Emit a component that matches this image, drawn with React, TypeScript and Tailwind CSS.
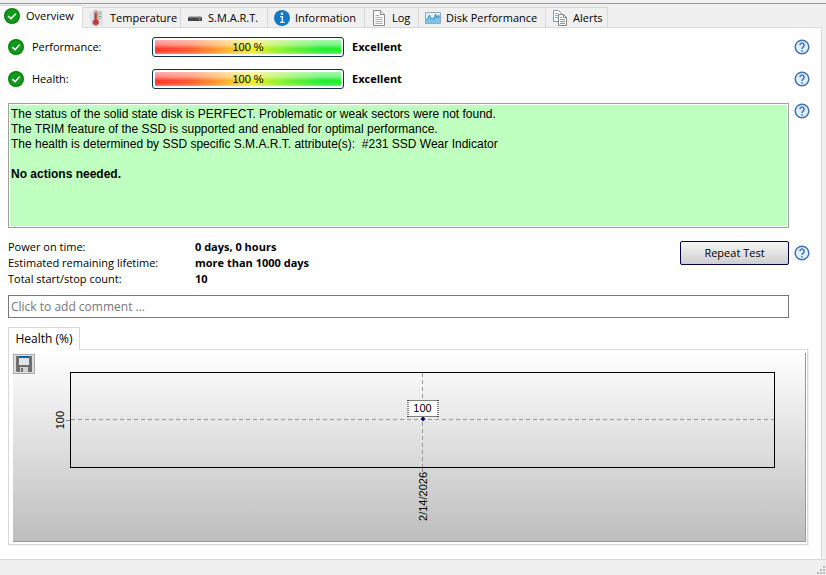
import { useState, type ReactNode } from "react";
import clsx from "clsx";

const CheckIcon = () => (
  <svg width="16" height="16" viewBox="0 0 16 16" className="shrink-0">
    <circle cx="8" cy="8" r="8" fill="#0b7a12" />
    <circle cx="8" cy="8" r="6.8" fill="#0d9a17" />
    <path d="M4.2 8.1 7 10.7l4.8-5" fill="none" stroke="#fff" strokeWidth="1.6" />
  </svg>
);

const ThermometerIcon = () => (
  <svg width="16" height="16" viewBox="0 0 16 16" className="shrink-0">
    <path d="M0 2 14 0v16H2z" fill="#dfe3ef" />
    <path d="M9 1h4v9H9z" fill="#d5e0c4" />
    <path d="M9.5 2.5h3M9.5 4.5h2M9.5 6.5h3M9.5 8.5h2" stroke="#8fa68a" />
    <path d="M5.2 2.2a1.6 1.6 0 0 1 3.2 0v7.2a3.2 3.2 0 1 1-3.2 0z" fill="#d6a7a7" stroke="#9a7480" strokeWidth=".6" />
    <path d="M6.8 3v8" stroke="#b03a38" strokeWidth="1.7" />
    <circle cx="6.8" cy="12.3" r="2.7" fill="#c8372c" />
  </svg>
);

const DriveIcon = () => (
  <svg width="16" height="16" viewBox="0 0 16 16" className="shrink-0">
    <path d="M2 6h12l1 2H1z" fill="#b4b4b4" />
    <path d="M1 7.5h14V11H1z" fill="#454545" />
    <path d="M11.5 9.3h2" stroke="#7fd07f" />
  </svg>
);

const InfoIcon = () => (
  <svg width="16" height="16" viewBox="0 0 16 16" className="shrink-0">
    <circle cx="8" cy="8" r="8" fill="#1279c9" />
    <circle cx="8" cy="3.8" r="1.2" fill="#fff" />
    <path d="M6.2 6.6h2.2v5.6M6 12.4h4.500" fill="none" stroke="#fff" strokeWidth="1.3" />
  </svg>
);

const LogIcon = () => (
  <svg width="16" height="16" viewBox="0 0 16 16" className="shrink-0">
    <path d="M2.5.5h7l4 4v11h-11z" fill="#fdfdfd" stroke="#8b8b8b" />
    <path d="M9.5.5v4h4" fill="#e4e4e4" stroke="#8b8b8b" />
    <path d="M4.5 5.5h4M4.5 7.5h7M4.5 9.5h7M4.5 11.5h7M4.5 13.5h7" stroke="#adadad" />
  </svg>
);

const GraphIcon = () => (
  <svg width="16" height="16" viewBox="0 0 16 16" className="shrink-0">
    <path d="M.5 2.5h15v11H.5z" fill="#dff2fc" stroke="#8fabbd" />
    <path d="M1 10 3 8l1.5-3L6 9l1.5-1L9 9.5 10.5 4 12 8l1.5-3L15 8v5H1z" fill="#7cc6ee" />
    <path d="M1 10 3 8l1.5-3L6 9l1.5-1L9 9.5 10.5 4 12 8l1.5-3L15 8" fill="none" stroke="#2d83bd" strokeWidth=".9" />
  </svg>
);

const CopyIcon = () => (
  <svg width="16" height="16" viewBox="0 0 16 16" className="shrink-0">
    <path d="M1.5.5h5l3 3v8h-8z" fill="#fff" stroke="#8d979f" />
    <path d="M3 3.5h3M3 5.5h5M3 7.5h3" stroke="#8db0cc" />
    <path d="M6.5 4.5h5l3 3v8h-8z" fill="#fff" stroke="#7d8890" />
    <path d="M11.5 4.5v3h3" fill="none" stroke="#7d8890" />
    <path d="M8 7.5h2M8 9.5h5M8 11.5h5M8 13.5h5" stroke="#6f9fc6" />
  </svg>
);

const SaveIcon = () => (
  <svg width="16" height="16" viewBox="0 0 16 16">
    <path d="M0 0h16v16H1l-1-1z" fill="#6e6e6e" />
    <path d="M3 0h10v9H3z" fill="#dfe4e7" />
    <path d="M3 0h10v2H3z" fill="#0c62a8" />
    <path d="M4 11h8v5H4z" fill="#d2d2d2" />
    <path d="M5 12h2v4H5z" fill="#6e6e6e" />
  </svg>
);

function HelpButton({ label }: { label: string }) {
  return (
    <button type="button" aria-label={label} className="h-4 w-4 shrink-0">
      <svg width="16" height="16" viewBox="0 0 16 16">
        <circle cx="8" cy="8" r="6.8" fill="#e0f1fd" stroke="#4272b8" strokeWidth="1.5" />
        <path d="M5.9 6.1a2.1 2.1 0 1 1 3.2 1.9C8.3 8.6 8 9 8 9.900" fill="none" stroke="#3f70b4" strokeWidth="1.5" />
        <circle cx="8" cy="11.8" r=".9" fill="#3f70b4" />
      </svg>
    </button>
  );
}

const tabs: { name: string; icon: ReactNode; width: string }[] = [
  { name: "Overview", icon: <CheckIcon />, width: "w-[83px]" },
  { name: "Temperature", icon: <ThermometerIcon />, width: "w-[98px]" },
  { name: "S.M.A.R.T.", icon: <DriveIcon />, width: "w-[87px]" },
  { name: "Information", icon: <InfoIcon />, width: "w-[97px]" },
  { name: "Log", icon: <LogIcon />, width: "w-[54px]" },
  { name: "Disk Performance", icon: <GraphIcon />, width: "w-[127px]" },
  { name: "Alerts", icon: <CopyIcon />, width: "w-[62px]" },
];

const stats = [
  ["Power on time:", "0 days, 0 hours"],
  ["Estimated remaining lifetime:", "more than 1000 days"],
  ["Total start/stop count:", "10"],
];

function Meter({ label, value, rating }: { label: string; value: number; rating: string }) {
  return (
    <div className="flex h-8 items-center">
      <CheckIcon />
      <span className="ml-2 w-[120px]">{label}</span>
      <div className="h-5 w-48 rounded-[3px] border border-[#12304f] bg-white p-[2px]">
        <div
          className="flex h-full items-center justify-center bg-[linear-gradient(to_bottom,rgba(255,255,255,.6),rgba(255,255,255,.4)_35%,transparent_60%,transparent_80%,rgba(255,255,255,.3)),linear-gradient(to_right,#ff3830,#ff5a30_18%,#ffb030_38%,#f0f020_52%,#80f030_70%,#22ee33_90%)] font-['Liberation_Sans'] text-[11px]"
          style={{ width: `${value}%` }}
        >
          {value} %
        </div>
      </div>
      <b className="ml-2 flex-1">{rating}</b>
      <HelpButton label={`${label} help`} />
    </div>
  );
}

function HealthChart() {
  return (
    <div className="grid grid-cols-[57px_1fr_30px] grid-rows-[19px_96px_73px] border-r border-b border-[#999] bg-linear-to-b from-white to-[#bebebe]">
      <div>
        <button type="button" aria-label="Save chart" className="mt-px grid h-5 w-[22px] place-items-center border border-[#aaa] bg-[#ddd]">
          <SaveIcon />
        </button>
      </div>
      <div className="col-span-2" />
      <div className="flex items-center justify-end">
        <span className="rotate-180 font-['Liberation_Sans'] text-[11px] leading-3 [writing-mode:vertical-rl]">100</span>
        <span className="h-px w-1 bg-[#888]" />
      </div>
      <div className="relative border border-black">
        <svg width="100%" height="100%" className="absolute inset-0" stroke="#999" strokeDasharray="4 3" shapeRendering="crispEdges">
          <line x1="0" x2="100%" y1="49%" y2="49%" />
          <line x1="50%" x2="50%" y1="0" y2="100%" />
        </svg>
        <span className="absolute top-[27px] left-1/2 h-[17px] w-[31px] -translate-x-1/2 border border-dotted border-black bg-white text-center font-['Liberation_Sans'] text-[11px] leading-[15px]">100</span>
        <svg width="5" height="5" viewBox="0 0 5 5" className="absolute top-[49%] left-1/2 -translate-1/2">
          <path d="M2.500 0 5 2.500 2.500 5 0 2.500z" fill="#000070" />
        </svg>
      </div>
      <div />
      <div />
      <div className="flex flex-col items-center">
        <span className="h-1 w-px bg-[#888]" />
        <span className="rotate-180 font-['Liberation_Sans'] text-[11px] leading-3 [writing-mode:vertical-rl]">2/14/2026</span>
      </div>
      <div />
    </div>
  );
}

export default function App() {
  const [active, setActive] = useState("Overview");

  return (
    <div className="flex min-h-screen flex-col bg-[#f0f0f0] font-['Open_Sans','Noto_Sans',sans-serif] text-[11px] leading-4 text-black">
      <div className="h-1 border-b border-[#999]" />
      <nav role="tablist" className="mt-px flex h-[22px] items-end">
        {tabs.map((t) => (
          <button
            key={t.name}
            type="button"
            role="tab"
            aria-selected={active === t.name}
            onClick={() => setActive(t.name)}
            className={clsx(
              "flex shrink-0 items-center border-t border-r border-[#d9d9d9] whitespace-nowrap",
              t.width,
              active === t.name ? "z-10 -mb-px h-[23px] gap-[6px] bg-white pb-[2px] pl-1" : "h-5 gap-[5px] pl-[6px]",
            )}
          >
            {t.icon}
            {t.name}
          </button>
        ))}
      </nav>

      <main className="mr-1 flex-1 border-t border-r border-[#d9d9d9] bg-white pt-[3px] pr-[11px] pb-[14px] pl-2">
        <Meter label="Performance:" value={100} rating="Excellent" />
        <Meter label="Health:" value={100} rating="Excellent" />

        <div className="mt-2 flex gap-[5px]">
          <div className="h-[125px] flex-1 border border-[#a0a0a0] bg-white p-px font-['Liberation_Sans'] text-[12px] leading-[15px]">
            <div className="h-full bg-[#bfffbf] px-px pt-[2px]">
              <p>The status of the solid state disk is PERFECT. Problematic or weak sectors were not found.</p>
              <p>The TRIM feature of the SSD is supported and enabled for optimal performance.</p>
              <p>The health is determined by SSD specific S.M.A.R.T. attribute(s):&nbsp; #231 SSD Wear Indicator</p>
              <p className="mt-[15px] font-bold">No actions needed.</p>
            </div>
          </div>
          <HelpButton label="Status help" />
        </div>

        <div className="mt-[11px] flex items-start">
          <dl className="flex-1">
            {stats.map(([name, value]) => (
              <div key={name} className="flex">
                <dt className="w-[187px]">{name}</dt>
                <dd className="font-bold">{value}</dd>
              </div>
            ))}
          </dl>
          <div className="mt-[2px] flex items-center gap-[5px]">
            <button type="button" className="h-6 w-[109px] rounded-[2px] border border-[#000048] bg-linear-to-b from-[#f6f6f6] to-[#cecece]">
              Repeat Test
            </button>
            <HelpButton label="Test help" />
          </div>
        </div>

        <div className="mt-2 pr-[21px]">
          <input
            type="text"
            aria-label="Comment"
            placeholder="Click to add comment ..."
            className="block h-[23px] w-full border border-[#777] bg-white px-[2px] text-[12px] placeholder:text-[#777]"
          />
        </div>

        <section className="mt-[9px] mr-[2px]">
          <button type="button" role="tab" aria-selected="true" className="relative z-10 -mb-px block h-[23px] w-[72px] border border-b-0 border-[#d9d9d9] bg-white text-[12px]">
            Health (%)
          </button>
          <div className="border border-[#d9d9d9] pt-[3px] pr-px pb-[2px] pl-1 shadow-[1px_1px_0_#f0f0f0]">
            <HealthChart />
          </div>
        </section>
      </main>

      <footer className="flex h-4 items-end justify-end border-t border-[#d9d9d9]">
        <svg width="12" height="12" viewBox="0 0 12 12" fill="#bbb">
          <path d="M9 3h2v2H9zM6 6h2v2H6zM9 6h2v2H9zM3 9h2v2H3zM6 9h2v2H6zM9 9h2v2H9z" />
        </svg>
      </footer>
    </div>
  );
}
